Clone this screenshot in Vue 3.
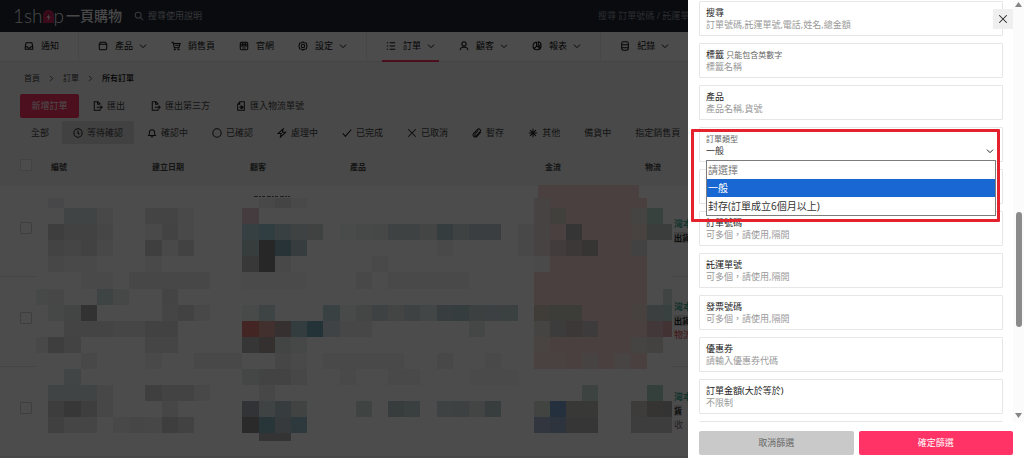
<script setup>
import { ref } from 'vue'

const icons = {
  inbox: 'M5 4h14l2 10v6H3v-6zM3 14h5l2 3h4l2-3h5',
  box: 'M3 8h18v10a3 3 0 0 1-3 3H6a3 3 0 0 1-3-3zM3 8l3-5h12l3 5M9 3h6',
  cart: 'M1 3h4l3 13h11l3-10H6M10 10h9M8 20h2v1H8zM17 20h2v1h-2z',
  store: 'M6 3h12a3 3 0 0 1 3 3v12a3 3 0 0 1-3 3H6a3 3 0 0 1-3-3V6a3 3 0 0 1 3-3zM3 12h18M9 3v8M15 3v8M3 8h18M8 17h8',
  gear: 'M12 2l3 2 5 1 1 5 1 2-1 2-1 5-5 1-3 2-3-2-5-1-1-5-1-2 1-2 1-5 5-1zM12 8a4 4 0 1 0 0 8 4 4 0 0 0 0-8z',
  list: 'M9 4h13M9 12h13M9 20h13M2 4h3M2 12h3M2 20h3',
  user: 'M12 2a5 5 0 1 0 0 10 5 5 0 0 0 0-10zM3 22v-2a6 6 0 0 1 6-5h6a6 6 0 0 1 6 5v2',
  pie: 'M11 3a9 9 0 1 0 9 12l-9-2zM15 2a9 9 0 0 1 7 8h-7zM15 13l7 1-3 5zM11 13l-6 5',
  data: 'M8 2h8a4 4 0 0 1 4 4v12a4 4 0 0 1-4 4H8a4 4 0 0 1-4-4V6a4 4 0 0 1 4-4zM4 9h16M4 16h16',
  out: 'M17 8V7l-5-5H3v20h14v-3M11 2v6h6M9 15h13M18 11l4 4-4 4',
  into: 'M9 2H20v20H4V8zM9 2v6H4M8 15h8M12 11v8M13 11l4 4-4 4',
  clock: 'M12 2a10 10 0 1 0 0 20 10 10 0 0 0 0-20zM12 6v7l4 2',
  bell: 'M2 18h20M5 18l1-8a6 6 0 0 1 12 0l1 8M9 21h6',
  circle: 'M12 2a10 10 0 1 0 0 20 10 10 0 0 0 0-20z',
  bolt: 'M15 2L3 13h7L8 22 21 10h-8z',
  check: 'M2 13l6 7L22 4',
  cross: 'M3 3l18 18M21 3L3 21',
  clip: 'M21 10l-9 10a5 5 0 0 1-8-7L14 3a4 4 0 0 1 6 5l-9 10a2 2 0 0 1-4-3l8-9',
  star: 'M12 2v20M2 12h20M5 5l14 14M19 5L5 19',
  search: 'M10 3a7 7 0 1 0 0 14 7 7 0 0 0 0-14zM15 15l7 7',
  down: 'M3 8l9 9 9-9',
  right: 'M7 3l9 9-9 9',
}

const navGroups = [
  [{ label: '通知', icon: 'inbox' }],
  [
    { label: '產品', icon: 'box', menu: true },
    { label: '銷售頁', icon: 'cart' },
    { label: '官網', icon: 'store' },
    { label: '設定', icon: 'gear', menu: true },
  ],
  [
    { label: '訂單', icon: 'list', menu: true, active: true },
    { label: '顧客', icon: 'user', menu: true },
    { label: '報表', icon: 'pie', menu: true },
  ],
  [{ label: '紀錄', icon: 'data', menu: true }],
]

const actions = [
  { label: '匯出', icon: 'out' },
  { label: '匯出第三方', icon: 'out' },
  { label: '匯入物流單號', icon: 'into' },
]

const tabs = [
  { label: '全部' },
  { label: '等待確認', icon: 'clock', active: true },
  { label: '確認中', icon: 'bell' },
  { label: '已確認', icon: 'circle' },
  { label: '處理中', icon: 'bolt' },
  { label: '已完成', icon: 'check' },
  { label: '已取消', icon: 'cross' },
  { label: '暫存', icon: 'clip' },
  { label: '其他', icon: 'star' },
  { label: '備貨中' },
  { label: '指定銷售頁' },
]

const columns = ['編號', '建立日期', '顧客', '產品', '金流', '物流']
const orders = [
  { region: '灣本', tag: '出貨' },
  { region: '灣本', tag: '出貨', alert: '物流' },
  { region: '灣本', tag: '貨', note: '收' },
]

// Masked customer data, one entry per block: column, row, width, height, colour
const mosaic = `
30.25 -1.4 6.25 .8 f8d6d2|30 -.6 7 10.6 f8d6d2|30 -.6 1 3.6 f2e2df|30 3 1 1 fcf8f7
0 -.6 1 .6 eeeff6|1 0 2 1 d8e4e7|3 0 1 1 f2f2f2|6 0 2 1 e4e4e4|8 0 1 1 f4f4f4
0 1 1 1 cfcfcf|1 1 2 1 dedede|3 1 1 1 ebebeb|6 1 1 1 f6f6f6|7 1 1 1 e2e2e2|8 1 1 1 f4f4f4
0 2 1 1 e2e2e2|1 2 1 1 e6e6e6|2 2 1 1 dcdcdc|3 2 1 1 f0f0f0|6 2 1 1 d4d4d4|7 2 1 1 f4f4f4|8 2 1 1 dcdcdc
0 3 1 1 eeeeee|1 3 2 1 f6f6f6|6 3 1 1 f6f6f6|2 4 2 1 f6f6f6|5 4 5 1 efefef
-.75 5 .75 1 eef4f4|0 5 1 1 efefef|3 5 1 1 d0e0e2|4 5 1 1 e9f0ef|7 5 1 1 e4e4e4
0 6 1 1 e8f0ef|1 6 1 1 dfe8e8|2 6 1 1 a8a8a8|7 6 1 1 e6e6e6|8 6 1 1 dcdcdc|9 6 1 1 f0f0f0
1 7 3 1 e4e4e4|4 7 2 1 eaeaea|6 7 2 1 dcdcdc|-.75 8 .75 1 f2f2f2|0 8 1 1 d0d0d0|1 8 1 1 e0e0e0|6 8 2 1 e7e7e7
2 9 1 1 f2f2f2|6 9 1 1 f4f4f4|9 9 3 1 f2f2f2|1 10 1 1 dae6e8
0 11 3 1 d8e4e6|3 11 1 1 eeeeee|6 11 1 1 d2d2d2|7 11 2 1 e2e2e2|9 11 1 1 f0f0f0
0 12 1 1 cdcdcd|1 12 1 1 bababa|2 12 1 1 d0d0d0|3 12 1 1 eeeeee|7 12 1 1 e9e9e9
0 13 1 1 d8d8d8|1 13 2 1 e7e7e7|4 13 1 1 f2f2f2|5 13 1 1 e9e9e9|6 13 1 1 eeeeee|7 13 1 1 d0d0d0|8 13 1 1 dcdcdc
13 -.6 1 .6 f2f2f2|14 -.6 1 .6 e4e4e4|15 -.6 1 .6 f4f4f4|12 0 1 1 e8c8d6
12 1 1 1 b4d4dc|13 1 1 1 a6d0da|14 1 1 1 c0d8da|15 1 1 1 d0dcde|16 1 1 1 d8dede|18 1 1 1 f6f8f8|19 1 2 1 ecf3f1|20 1 1 1 e8f0ef|21 1 2 1 cfdcde|23 1 1 1 e0e6e6|24 1 1 1 b4cdd4|25 1 1 1 cfdee2|26 1 2 1 c2d0d7|29 1 1 1 f2f0f0
12 2 1 1 b8c8ce|13 2 1 2 828282|14 2 1 1 84acb8|15 2 1 1 b8ced2|24 2 1 1 f4f4f4|29 2 1 1 f2f2f2
12 3 1 1 bcbcbc|14 3 1 1 f2f2f2|20 3 1 1 f4f4f4|12 4 4 1 f7f7f7|19 4 1 1 f2f2f2|21 4 5 1 f6f6f6
12 6 1 1 f2f6f6|13 6 1 1 cfe0e0|17 6 1 1 c4dadd|18 6 1 1 f2f6f6|19 6 1 1 dfe9e7|20 6 1 1 d2dedf|21 6 1 1 e0e8e8|22 6 1 1 d2dedf|23 6 1 1 e2eae9|24 6 1 1 bccfd5|25 6 1 1 b4ccd0|26 6 1 1 c8d8da|27 6 1 1 ced8dc|28 6 1 1 c4dad8
12 7 1 1 e08078|13 7 1 1 dca09c|14 7 1 1 b8a0a2|15 7 1 1 aaccd4|16 7 1 1 7aaaba|17 7 1 1 d8e2e6|18 7 2 1 f2eeee|26 7 1 1 e6eeec
12 8 1 1 b4b4b4|13 8 1 1 b0a0a2|14 8 1 1 e0e6e8|15 8 1 1 e9eeef|14 9 1 1 e9e9e9|15 9 1 1 f4f4f4|17 9 5 1 f6f6f6|24 9 1 1 f2f2f2
12 10 1 1 e8eeec|13 10 2 1 e2e2e2|15 10 1 1 eeeeee|18 10 1 1 f4f4f4|21 10 2 1 f4f4f4|13 11 1 1 eeeeee
12 12 1 1 a4acba|13 12 1 1 d8e0e2|14 12 1 1 b8ced2|15 12 1 1 dadcdc|19 12 1 1 d4e2dc|21 12 1 1 bac8ce|22 12 1 1 c4d2d6|24 12 1 1 d0dedc|25 12 1 1 cddbdd|26 12 1 1 e2e8e8|27 12 1 1 bccdd1
12 13 1 1 8e8e8e|13 13 1 1 88b4be|14 13 1 1 b4c4c8|15 13 1 1 98c0c8|13 14 2 .5 b0b0b0
31 0 1 1 dcd6cc|36 0 1 1 e8e4e2|37 0 1 1 b8dcd4|32 1 1 1 b4b2b2|36 1 1 1 f2deda|37 1 1.57 1 c6c8c8
31 2 1 1 dcc8c8|32 2 1 1 ccbcbc|33 2 1 1 b4b2ae|36 2 1 1 dedede|38 5 .57 1 d8e8e4
30 6 1 1 d8c8bc|31 6 2 1 c8ccbe|36 6 1 1 eedcd8|37 6 1 1 c8d2d2|38 6 .57 1 bcd8d6
30 7 1 1 ebe3e2|31 7 1 1 ccc8c8|32 7 1 1 ccbcbc|33 7 1 1 cec6c5|37 7 1 1 dcbcc0|38 7 .57 1 dca8aa
30 8 1 1 f4e0dc|36 8 1 1 ece4e2|37 8 1 1 e0dcd9|30 9 2 1 f4dcd8|33 9 1 1 eee2df|35 9 1 1 f0e4e2|27 9 1 1 f4f4f4|26 10 3 1 f7f7f7
33 11 1 1 c8e2da|37 11 1 1 acd6ca|30 12 1 1 dce4de|31 12 1 1 7ca2d0|32 12 2 1 bcbcb9|36 12 1 1 ccc8c4|37 12 1 1 b6b0ac|38 12 .57 1 b0acac
30 13 1 1 a8b6cf|31 13 1 1 9cb0cc|32 13 2 1 b6b6b6|36 13 2.57 1 cdcdcd`
  .trim()
  .split(/[|\n]/)
  .map((entry) => {
    const [x, y, w, h, color] = entry.split(' ')
    return { x, y, w, h, fill: '#' + color }
  })

const orderType = ref('normal')
const options = [
  { value: '', label: '請選擇' },
  { value: 'normal', label: '一般' },
  { value: 'archived', label: '封存(訂單成立6個月以上)' },
]

const fields = [
  { id: 'keyword', label: '搜尋', hint: '訂單號碼,託運單號,電話,姓名,總金額' },
  { id: 'tag', label: '標籤', extra: '只能包含英數字', hint: '標籤名稱' },
  { id: 'product', label: '產品', hint: '產品名稱,貨號' },
  { id: 'type', kind: 'select', label: '訂單類型' },
  { id: 'blank', kind: 'blank' },
  { id: 'order-no', label: '訂單號碼', hint: '可多個，請使用,隔開' },
  { id: 'ship-no', label: '託運單號', hint: '可多個，請使用,隔開' },
  { id: 'invoice', label: '發票號碼', hint: '可多個，請使用,隔開' },
  { id: 'coupon', label: '優惠券', hint: '請輸入優惠券代碼' },
  { id: 'amount', label: '訂單金額(大於等於)', hint: '不限制' },
  { id: 'rest', kind: 'blank' },
]
</script>

<template>
  <div class="app" lang="zh-Hant-TW">
    <div class="page">
      <header class="topbar">
        <a class="brand" href="#">
          <span class="latin">1sh</span>
          <svg class="bag" viewBox="0 0 12 15">
            <path d="M0 15V7l1-4 3-2h4l3 2 1 4v8z" fill="#c8265a" />
            <path d="M4 4h4M3 7l6-1" stroke="#7b1d3e" stroke-width="1" />
            <path d="M7 5L4 9h2l-1 4 3-5H6z" fill="#fff" />
          </svg>
          <span class="latin">p</span>
          <span class="brand-name">一頁購物</span>
        </a>
        <label class="help">
          <svg class="icon" viewBox="0 0 24 24"><path :d="icons.search" /></svg>
          <input type="text" placeholder="搜尋使用說明" aria-label="搜尋使用說明" />
        </label>
        <input class="order-search" type="text" placeholder="搜尋 訂單號碼 / 託運單號" aria-label="搜尋訂單" />
      </header>

      <nav class="nav">
        <div v-for="(group, g) in navGroups" :key="g" class="group">
          <a v-for="item in group" :key="item.label" href="#" class="nav-item" :class="{ active: item.active }">
            <svg class="icon" viewBox="0 0 24 24"><path :d="icons[item.icon]" /></svg>
            <span>{{ item.label }}</span>
            <svg v-if="item.menu" class="icon caret" viewBox="0 0 24 24"><path :d="icons.down" /></svg>
          </a>
        </div>
      </nav>

      <main>
        <div class="crumbs">
          <a href="#">首頁</a>
          <svg class="icon chev" viewBox="0 0 24 24"><path :d="icons.right" /></svg>
          <a href="#">訂單</a>
          <svg class="icon chev" viewBox="0 0 24 24"><path :d="icons.right" /></svg>
          <strong>所有訂單</strong>
        </div>

        <div class="actions">
          <button type="button" class="primary">新增訂單</button>
          <button v-for="a in actions" :key="a.label" type="button" class="plain">
            <svg class="icon" viewBox="0 0 24 24"><path :d="icons[a.icon]" /></svg>
            {{ a.label }}
          </button>
        </div>

        <div class="tabs">
          <button v-for="t in tabs" :key="t.label" type="button" class="plain" :class="{ active: t.active }">
            <svg v-if="t.icon" class="icon" viewBox="0 0 24 24"><path :d="icons[t.icon]" /></svg>
            {{ t.label }}
          </button>
        </div>

        <div class="table-wrap">
          <table>
            <thead>
              <tr>
                <th class="pick"><input type="checkbox" aria-label="全選" /></th>
                <th v-for="(c, i) in columns" :key="c" :class="'col' + i">{{ c }}</th>
              </tr>
            </thead>
            <tbody>
              <tr v-for="(o, i) in orders" :key="i">
                <td class="pick"><input type="checkbox" aria-label="選取訂單" /></td>
                <td></td>
                <td></td>
                <td></td>
                <td></td>
                <td></td>
                <td class="ship">
                  <div class="region">{{ o.region }}</div>
                  <div><span class="tag">{{ o.tag }}</span></div>
                  <div v-if="o.alert" class="alert">{{ o.alert }}</div>
                  <div v-if="o.note" class="note">{{ o.note }}</div>
                </td>
              </tr>
            </tbody>
          </table>
          <svg class="mosaic" viewBox="0 0 636 265" aria-hidden="true">
            <rect width="636" height="265" fill="#fff" />
            <g transform="translate(12.3 22) scale(16.18 16.1)" shape-rendering="crispEdges">
              <rect v-for="(m, i) in mosaic" :key="i" :x="m.x" :y="m.y" :width="m.w" :height="m.h" :fill="m.fill" />
            </g>
            <path d="M218 10.500h36" stroke="#666" stroke-dasharray="4 1 2 1 3 2" />
          </svg>
        </div>
      </main>
    </div>

    <div class="backdrop"></div>

    <aside class="drawer">
      <div class="scroll">
        <form class="fields">
          <div v-for="f in fields" :key="f.id" class="field">
            <template v-if="f.kind === 'select'">
              <label class="small" :for="f.id">{{ f.label }}</label>
              <select :id="f.id" v-model="orderType">
                <option v-for="o in options" :key="o.value" :value="o.value">{{ o.label }}</option>
              </select>
              <svg class="icon select-caret" viewBox="0 0 24 24"><path :d="icons.down" /></svg>
              <ul class="menu" role="listbox" aria-label="訂單類型">
                <li
                  v-for="o in options"
                  :key="o.value"
                  role="option"
                  :aria-selected="o.value === orderType"
                  :class="{ chosen: o.value === orderType, empty: !o.value }"
                  @click="orderType = o.value"
                >
                  {{ o.label }}
                </li>
              </ul>
              <div class="marker"></div>
            </template>
            <template v-else-if="!f.kind">
              <label :for="f.id">{{ f.label }} <small v-if="f.extra">{{ f.extra }}</small></label>
              <input :id="f.id" type="text" :placeholder="f.hint" />
            </template>
          </div>
        </form>
        <div class="bar" aria-hidden="true">
          <svg viewBox="0 0 7 5"><path d="M3.500 0L7 5H0z" /></svg>
          <div class="track"><span class="thumb"></span></div>
          <svg viewBox="0 0 7 5"><path d="M0 0h7L3.500 5z" /></svg>
        </div>
      </div>
      <footer>
        <button type="button" class="cancel">取消篩選</button>
        <button type="button" class="confirm">確定篩選</button>
      </footer>
      <button type="button" class="close" aria-label="關閉">
        <svg class="icon" viewBox="0 0 24 24"><path :d="icons.cross" /></svg>
      </button>
    </aside>
  </div>
</template>

<style>
body {
  margin: 0;
  overflow: hidden;
}
</style>

<style scoped>
.app,
.app * {
  box-sizing: border-box;
}
.app {
  position: relative;
  height: 100vh;
  overflow: hidden;
  font: 9px/14px "Noto Sans", "Noto Sans CJK TC", sans-serif;
  color: #444;
}
button,
input,
select {
  font: inherit;
  color: inherit;
  margin: 0;
  padding: 0;
  border: 0;
  background: none;
  outline: 0;
}
a {
  color: inherit;
  text-decoration: none;
}
.icon {
  width: 10px;
  height: 10px;
  flex: none;
  fill: none;
  stroke: currentColor;
  stroke-width: 2.5;
}
.page {
  min-height: 100%;
  background: #f5f5f5;
}
.topbar {
  display: flex;
  align-items: center;
  height: 32px;
  padding-left: 13px;
  background: #1e2535;
}
.brand {
  display: flex;
  align-items: center;
  width: 121px;
  color: #f0f0f0;
}
.latin {
  font: 300 19px/24px Lato, sans-serif;
}
.bag {
  width: 11px;
  height: 14px;
}
.brand-name {
  margin-left: 2px;
  font-size: 14px;
  font-weight: 500;
  line-height: 20px;
  white-space: nowrap;
}
.help {
  display: flex;
  align-items: center;
  gap: 4px;
  width: 464px;
  color: #bbb;
}
.help input,
.order-search {
  width: 120px;
}
.topbar input::placeholder {
  color: #b4b6ba;
}
.topbar .order-search::placeholder {
  color: #93969c;
}
.nav {
  display: flex;
  height: 30px;
  padding-left: 5px;
  background: #fff;
  border-bottom: 1px solid #e6e6e6;
}
.group {
  display: flex;
  gap: 16px;
  padding: 0 15px;
}
.group + .group {
  border-left: 1px solid #eee;
}
.nav-item {
  display: flex;
  align-items: center;
  gap: 7px;
  padding: 0 4px;
  border-bottom: 2px solid transparent;
  margin-bottom: -1px;
  color: #111;
  white-space: nowrap;
}
.nav-item.active {
  border-color: #ff3366;
}
.icon.caret {
  width: 8px;
  height: 8px;
  margin-left: -1px;
  stroke-width: 3;
}
.crumbs {
  display: flex;
  align-items: center;
  gap: 8px;
  height: 32px;
  padding-left: 24px;
  font-size: 8px;
}
.crumbs strong {
  font-weight: 500;
  color: #111;
}
.icon.chev {
  width: 7px;
  height: 7px;
  stroke-width: 3;
}
.actions,
.tabs {
  display: flex;
  gap: 2px;
  padding-left: 20px;
}
.primary {
  width: 59px;
  height: 24px;
  border-radius: 2px;
  background: #ff3366;
  color: #fff;
}
.plain {
  display: flex;
  align-items: center;
  gap: 4px;
  height: 24px;
  padding: 0 12px;
  white-space: nowrap;
}
.tabs {
  padding-top: 3px;
}
.tabs .plain {
  height: 23px;
  padding: 0 11px;
}
.plain .icon {
  color: #222;
}
.plain.active {
  border-radius: 2px;
  background: #dadada;
}
.table-wrap {
  position: relative;
}
table {
  width: 100%;
  table-layout: fixed;
  border-collapse: collapse;
}
th {
  height: 42px;
  padding: 3px 0 0;
  font-size: 8px;
  text-align: left;
  color: #444;
}
.pick {
  width: 51px;
  padding: 0 0 0 20px;
}
.col0 {
  width: 101px;
}
.col1 {
  width: 98px;
}
.col2 {
  width: 100px;
}
.col3 {
  width: 195px;
}
.col4 {
  width: 100px;
}
.pick input {
  display: block;
  appearance: none;
  width: 12px;
  height: 12px;
  border: 1px solid #ddd;
  border-radius: 1px;
  background: #fff;
}
td.pick input {
  margin-top: -6px;
  border-color: #d0d0d0;
}
tbody tr {
  height: 90px;
  background: #fff;
  border-bottom: 1px solid #e8e8e8;
}
td {
  padding: 0;
}
.ship {
  padding-left: 29px;
}
.region {
  font-weight: 700;
  color: #3cab90;
}
.tag {
  background: #ddd;
  color: #000;
  font-size: 8px;
  font-weight: 500;
}
.alert {
  color: #d8383c;
}
.note {
  color: #777;
}
.mosaic {
  position: absolute;
  top: 42px;
  left: 36px;
  width: 636px;
  height: 265px;
  overflow: visible;
}
.backdrop {
  position: absolute;
  inset: 0;
  background: rgba(0, 0, 0, 0.7);
}
.drawer {
  position: absolute;
  top: 0;
  right: 0;
  bottom: 0;
  display: flex;
  flex-direction: column;
  width: 336px;
  max-width: 100%;
  background: #fff;
}
.scroll {
  flex: 1;
  min-height: 0;
  display: flex;
  overflow: hidden;
}
.fields {
  flex: 1;
  display: flex;
  flex-direction: column;
  gap: 7px;
  padding: 1px 10px 0 11px;
}
.field {
  position: relative;
  flex: none;
  display: flex;
  flex-direction: column;
  min-height: 35px;
  padding: 4px 6px;
  border: 1px solid #e6e6e6;
  border-radius: 1px;
}
.field label {
  line-height: 13px;
  color: #222;
}
.field small,
.field .small {
  font-size: 8px;
  color: #666;
}
.field input,
.field select {
  width: 100%;
  height: 12px;
  line-height: 12px;
}
.field input::placeholder {
  color: #999;
  opacity: 1;
}
.field select {
  appearance: none;
  color: #333;
}
.select-caret {
  position: absolute;
  right: 8px;
  bottom: 6px;
  width: 8px;
  height: 8px;
  color: #222;
  stroke-width: 3;
}
.menu {
  position: absolute;
  z-index: 2;
  top: 32px;
  left: 6px;
  right: 6px;
  margin: 0;
  padding: 0;
  list-style: none;
  border: 1px solid #7c7c7c;
  background: #fff;
  font-size: 10px;
  line-height: 18px;
  color: #333;
}
.menu li {
  padding-left: 1px;
}
.menu .empty {
  color: #777;
}
.menu .chosen {
  background: #1967d2;
  color: #fff;
}
.marker {
  position: absolute;
  z-index: 3;
  top: 1px;
  left: -9px;
  right: 2px;
  height: 93px;
  border: 3px solid #e3222e;
  border-radius: 1px;
  pointer-events: none;
}
.bar {
  display: flex;
  flex-direction: column;
  align-items: center;
  width: 11px;
  padding: 2px 0 4px;
  background: #fbfbfb;
}
.bar svg {
  width: 7px;
  height: 5px;
  fill: #858585;
}
.track {
  flex: 1;
  display: grid;
  grid-template-rows: 205fr 115fr 86fr;
}
.thumb {
  grid-row: 2;
  width: 6px;
  border-radius: 3px;
  background: #8b8b8b;
}
footer {
  display: flex;
  gap: 5px;
  padding: 9px 11px 3px;
}
footer button {
  flex: 1;
  height: 24px;
  border-radius: 2px;
}
.cancel {
  background: #c9c9c9;
  color: #666;
}
.confirm {
  background: #ff3366;
  color: #fff;
}
.close {
  position: absolute;
  top: 9px;
  right: 11px;
  display: grid;
  place-items: center;
  width: 20px;
  height: 20px;
  background: #efefef;
  color: #222;
}
</style>
